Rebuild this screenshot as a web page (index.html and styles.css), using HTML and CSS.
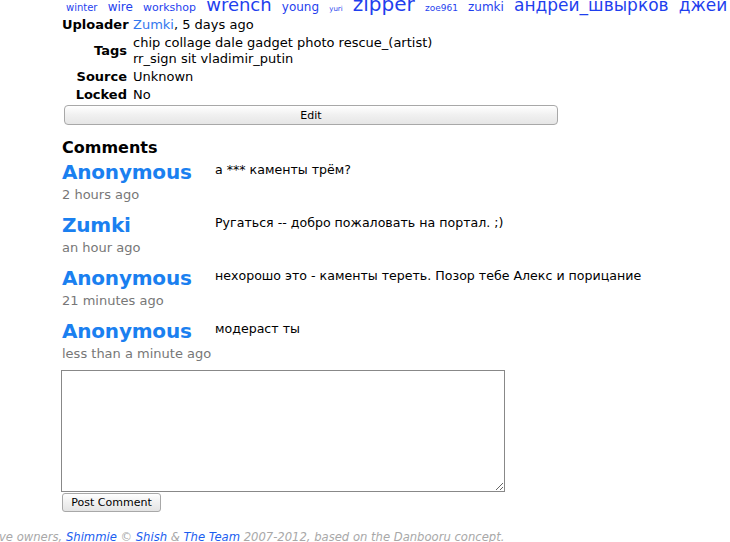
FILE: index.html
```html
<!DOCTYPE html>
<html>
<head>
<meta charset="utf-8">
<link rel="stylesheet" href="styles.css">
</head>
<body>
<div class="page">
  <div class="tagcloud">
    <a class="t10">winter</a>
    <a class="t13">wire</a>
    <a class="t11">workshop</a>
    <a class="t18">wrench</a>
    <a class="t13">young</a>
    <a class="t7">yuri</a>
    <a class="t20">zipper</a>
    <a class="t9">zoe961</a>
    <a class="t13">zumki</a>
    <a class="t17">андрей_швырков</a>
    <a class="t17">джей</a>
  </div>

  <div class="info">
    <div class="label">Uploader</div>
    <div class="value"><a class="ulink">Zumki</a>, 5 days ago</div>
    <div class="label mid">Tags</div>
    <div class="value">chip collage dale gadget photo rescue_(artist)<br>rr_sign sit vladimir_putin</div>
    <div class="label">Source</div>
    <div class="value">Unknown</div>
    <div class="label">Locked</div>
    <div class="value">No</div>
  </div>
  <button class="edit">Edit</button>

  <h3 class="heading">Comments</h3>
  <div class="comments">
    <div class="comment">
      <div class="who"><a class="name">Anonymous</a><div class="when">2 hours ago</div></div>
      <div class="msg">а *** каменты трём?</div>
    </div>
    <div class="comment">
      <div class="who"><a class="name">Zumki</a><div class="when">an hour ago</div></div>
      <div class="msg">Ругаться -- добро пожаловать на портал. ;)</div>
    </div>
    <div class="comment">
      <div class="who"><a class="name">Anonymous</a><div class="when">21 minutes ago</div></div>
      <div class="msg">нехорошо это - каменты тереть. Позор тебе Алекс и порицание</div>
    </div>
    <div class="comment">
      <div class="who"><a class="name">Anonymous</a><div class="when">less than a minute ago</div></div>
      <div class="msg">модераст ты</div>
    </div>
  </div>

  <form class="post">
    <textarea class="box"></textarea>
    <button type="button" class="postbtn">Post Comment</button>
  </form>
</div>
<div class="footer">ve owners, <a>Shimmie</a> © <a>Shish</a> &amp; <a>The Team</a> 2007-2012, based on the Danbooru concept.</div>
</body>
</html>
```

FILE: styles.css
```css
html, body {
  margin: 0;
  padding: 0;
  background: #fff;
  overflow: hidden;
}
body {
  font-family: "DejaVu Sans", Verdana, sans-serif;
  font-size: 13px;
  color: #000;
  width: 730px;
  height: 542px;
}
a { color: #2262ee; text-decoration: none; }

.page {
  padding-left: 62px;
}

.tagcloud {
  margin-top: -6px;
  height: 23px;
  line-height: 20px;
  white-space: nowrap;
  padding-left: 4px;
}
.tagcloud a { color: #1f3fee; margin-right: 6px; }
.t7 { font-size: 7px; }
.t9 { font-size: 9px; }
.t10 { font-size: 10px; }
.t11 { font-size: 11px; }
.t13 { font-size: 12px; }
.t17 { font-size: 17px; }
.t18 { font-size: 18px; }
.t20 { font-size: 20px; }

.info {
  display: grid;
  grid-template-columns: 65px auto;
  column-gap: 6px;
  row-gap: 2px;
  line-height: 16px;
  margin-top: 0;
}
.label {
  font-weight: bold;
  text-align: right;
}
.label.mid { align-self: center; }
.ulink { color: #3378ee; }

.edit {
  display: block;
  margin: 2px 0 0 2px;
  width: 494px;
  height: 20px;
  font-family: "DejaVu Sans", Verdana, sans-serif;
  font-size: 11px;
  color: #000;
  border: 1px solid #a8a8a8;
  border-radius: 4px;
  background: linear-gradient(#ffffff, #f0f0f0 50%, #e6e6e6);
  padding: 0;
}

.heading {
  font-size: 16px;
  font-weight: bold;
  margin: 13px 0 0 0;
  line-height: 20px;
}

.comments {
  display: flex;
  flex-direction: column;
  gap: 7px;
  margin-top: 1px;
}
.comment {
  display: grid;
  grid-template-columns: 153px 1fr;
}
.name {
  display: block;
  font-size: 20px;
  font-weight: bold;
  color: #1a80f0;
  line-height: 26px;
  letter-spacing: -0.2px;
}
.when {
  color: #777;
  font-size: 13px;
  line-height: 20px;
}
.msg {
  padding-top: 2px;
  line-height: 18px;
  font-size: 12.6px;
}

.post {
  margin: 6px 0 0 -1px;
  display: flex;
  flex-direction: column;
  align-items: flex-start;
}
.box {
  width: 444px;
  height: 122px;
  box-sizing: border-box;
  border: 1px solid #888;
  margin: 0;
  padding: 2px;
  resize: both;
}
.postbtn {
  margin: 1px 0 0 1px;
  width: 99px;
  height: 19px;
  padding: 0;
  font-family: "DejaVu Sans", Verdana, sans-serif;
  font-size: 11px;
  color: #000;
  border: 1px solid #a8a8a8;
  border-radius: 3px;
  background: linear-gradient(#ffffff, #f0f0f0 50%, #e4e4e4);
}

.footer {
  margin-top: 18px;
  margin-left: -1px;
  font-style: italic;
  font-size: 11.6px;
  color: #a8a8a8;
  white-space: nowrap;
}
.footer a { color: #1b5ef0; }
```
